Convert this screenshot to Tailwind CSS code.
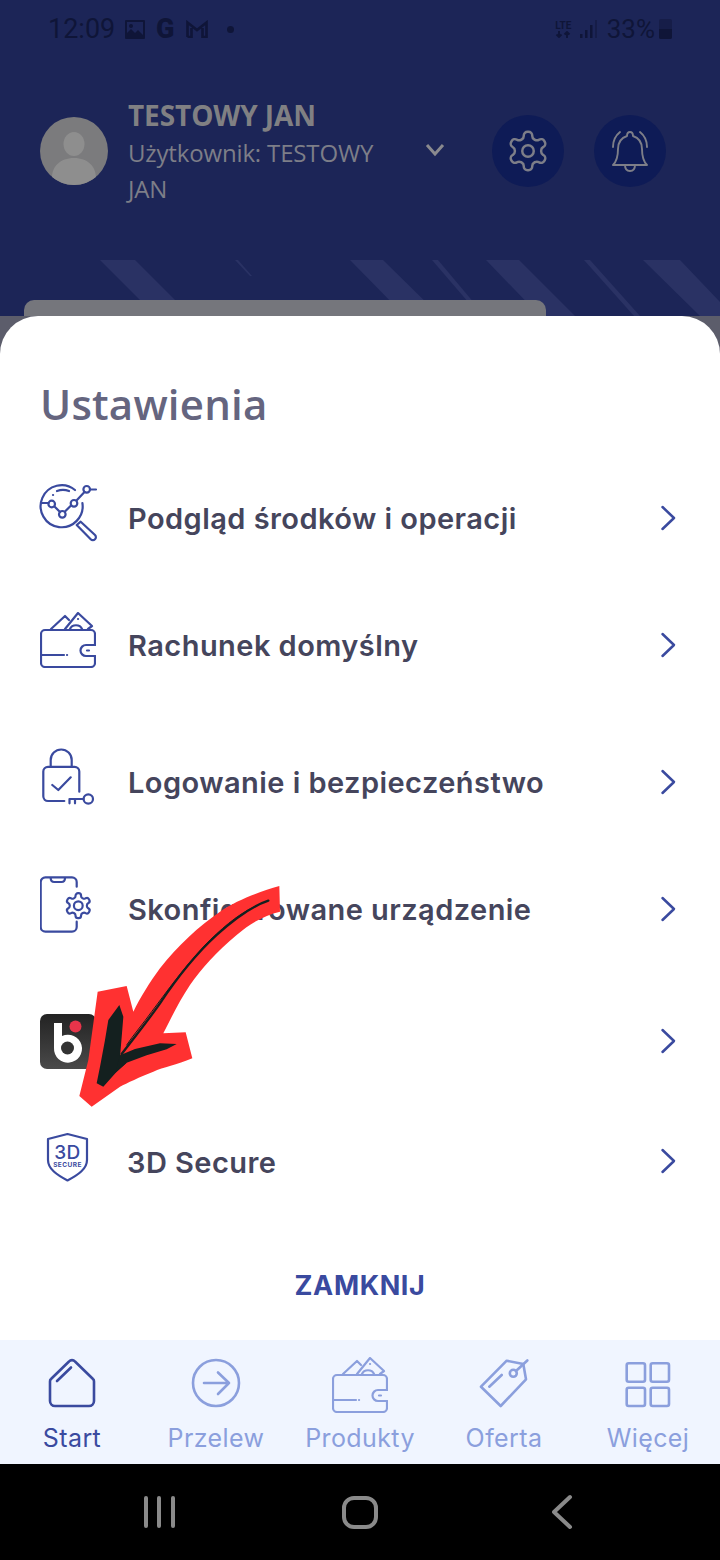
<!DOCTYPE html>
<html lang="pl">
<head>
  <meta charset="UTF-8"/>
  <meta name="viewport" content="width=device-width, initial-scale=1.0"/>
  <title>Ustawienia</title>
  <script src="https://cdn.jsdelivr.net/npm/@tailwindcss/browser@4"></script>
</head>
<body class="bg-black">
<div class="relative w-[720px] h-[1560px] overflow-hidden flex flex-col font-['Inter','Noto_Sans',sans-serif]">

  <!-- Dimmed header -->
  <header class="relative h-[316px] shrink-0 bg-[#1c2557] overflow-hidden">
    <!-- stripes -->
    <svg class="absolute left-0 top-0" width="720" height="316" viewBox="0 0 720 316" fill="#2a3264">
      <polygon points="100,260 135,260 191,316 156,316"/>
      <polygon points="235,260 238,260 252,276 250,276"/>
      <polygon points="350,260 383,260 440,316 405,316"/>
      <polygon points="432,260 438,260 480,310 475,310"/>
      <polygon points="486,260 519,260 575,316 540,316"/>
      <polygon points="584,260 590,260 640,316 634,316"/>
      <polygon points="643,260 680,260 720,302 720,316 700,316"/>
    </svg>
    <div class="absolute left-[24px] top-[300px] w-[522px] h-[30px] rounded-t-[10px] bg-[#75767c]"></div>

    <!-- status bar -->
    <div class="relative h-[58px] flex items-center justify-between pl-[48px] pr-[48px] text-[#0f1538]">
      <div class="flex items-center">
        <span class="text-[27px] font-['Roboto'] font-normal w-[77px]">12:09</span>
        <svg width="20" height="19" viewBox="0 0 20 19" fill="#0f1538"><path d="M1 0h18a1 1 0 0 1 1 1v17a1 1 0 0 1-1 1H1a1 1 0 0 1-1-1V1a1 1 0 0 1 1-1zM2 2v11l4-4 4 4 3-3 5 5V2z" fill-rule="evenodd"/><circle cx="6" cy="6" r="2"/></svg>
        <span class="ml-[11px] w-[29px] text-[27px] leading-none font-['Roboto'] font-black">G</span>
        <svg class="ml-[1px]" width="22" height="18" viewBox="0 0 22 18" fill="none" stroke="#0f1538" stroke-width="2.6"><path d="M1.5 17V2.5L11 10l9.500-7.500V17H16.500V8M1.500 17H5.500V8"/></svg>
        <span class="ml-[19px] w-[7px] h-[7px] rounded-full bg-[#0f1538]"></span>
      </div>
      <div class="flex items-center">
        <div class="w-[21px] flex flex-col items-center leading-none">
          <span class="text-[10px] font-bold font-['Roboto'] leading-[10px]">LTE</span>
          <svg width="16" height="7" viewBox="0 0 16 7" fill="none" stroke="#0f1538" stroke-width="1.800"><path d="M4 0v6M1.500 3.500 4 6l2.500-2.500M12 7V1M9.500 3.500 12 1l2.500 2.500"/></svg>
        </div>
        <svg class="ml-[6px]" width="18" height="20" viewBox="0 0 18 20"><rect x="0" y="15" width="2.500" height="4" fill="#0f1538"/><rect x="5" y="11" width="2.500" height="8" fill="#0f1538"/><rect x="10" y="6" width="2.500" height="13" fill="#0f1538"/><rect x="15" y="1" width="2" height="18" fill="#161d48"/></svg>
        <span class="ml-[9px] text-[26px] font-['Roboto'] font-normal">33%</span>
        <div class="ml-[4px] w-[13px] h-[20px] rounded-[2px] bg-[#161d48] flex flex-col justify-end">
          <div class="h-[10px] bg-[#0f1538] rounded-b-[2px]"></div>
        </div>
      </div>
    </div>

    <!-- user row -->
    <div class="relative flex items-center pl-[40px] pt-[38px]">
      <svg class="shrink-0" width="68" height="68" viewBox="0 0 68 68">
        <circle cx="34" cy="34" r="34" fill="#7b7b7d"/>
        <ellipse cx="34" cy="27" rx="10.500" ry="12" fill="#8e8e8e"/>
        <path d="M12.100 60C12 50 20 41 34 41s22 9 21.900 19a34 34 0 0 1-43.800 0z" fill="#8e8e8e"/>
      </svg>
      <div class="ml-[20px] w-[270px] translate-y-[1px]">
        <p class="mb-[2px] text-[28px] leading-[36px] font-bold text-[#808083] font-['Open_Sans'] tracking-[-0.1px]">TESTOWY JAN</p>
        <p class="w-[260px] text-[24px] leading-[36px] text-[#7d7e88] font-['Open_Sans'] tracking-[-0.15px]">Użytkownik: TESTOWY JAN</p>
      </div>
      <svg class="shrink-0 ml-[27px] -mt-[2px]" width="20" height="14" viewBox="0 0 20 14" fill="none" stroke="#8a8a8e" stroke-width="3"><path d="M2 2l8 9 8-9"/></svg>
      <div class="ml-[47px] w-[72px] h-[72px] rounded-full bg-[#0e1b56] flex items-center justify-center">
        <svg width="46" height="46" viewBox="0 0 24 24" fill="none" stroke="#7d7e88" stroke-width="1.300"><path d="M12.220 2h-.44a2 2 0 0 0-2 2v.18a2 2 0 0 1-1 1.730l-.43.25a2 2 0 0 1-2 0l-.15-.08a2 2 0 0 0-2.730.73l-.22.38a2 2 0 0 0 .73 2.730l.15.1a2 2 0 0 1 1 1.720v.51a2 2 0 0 1-1 1.740l-.15.09a2 2 0 0 0-.73 2.730l.22.38a2 2 0 0 0 2.730.73l.15-.08a2 2 0 0 1 2 0l.43.25a2 2 0 0 1 1 1.730V20a2 2 0 0 0 2 2h.44a2 2 0 0 0 2-2v-.18a2 2 0 0 1 1-1.730l.43-.25a2 2 0 0 1 2 0l.15.08a2 2 0 0 0 2.730-.73l.22-.39a2 2 0 0 0-.73-2.730l-.15-.08a2 2 0 0 1-1-1.740v-.5a2 2 0 0 1 1-1.740l.15-.09a2 2 0 0 0 .73-2.730l-.22-.38a2 2 0 0 0-2.730-.73l-.15.08a2 2 0 0 1-2 0l-.43-.25a2 2 0 0 1-1-1.730V4a2 2 0 0 0-2-2z"/><circle cx="12" cy="12" r="3"/></svg>
      </div>
      <div class="ml-[30px] w-[72px] h-[72px] rounded-full bg-[#0e1b56] flex items-center justify-center">
        <svg width="40" height="44" viewBox="610 130 40 44" fill="none" stroke="#7d7e88" stroke-width="1.900" stroke-linejoin="round" stroke-linecap="round">
          <path d="M630 133c-2 0-3 2-3 4-6 2-9 7-9 13 0 7-1 12-5 16h34c-4-4-5-9-5-16 0-6-3-11-9-13 0-2-1-4-3-4z"/>
          <path d="M625 166c0 4 2 6 5 6s5-2 5-6"/>
          <path d="M613 148c0-6 2-11 7-15M647 148c0-6-2-11-7-15"/>
        </svg>
      </div>
    </div>
  </header>

  <!-- Settings sheet -->
  <main class="relative flex-1 bg-[#5c5d6b]">
    <div class="h-full bg-white rounded-t-[38px] pl-[40px] pr-[43px]">
      <h1 class="pt-[60px] text-[42px] leading-[56px] font-semibold text-[#65657f] font-['Open_Sans'] tracking-[0.2px]">Ustawienia</h1>

      <ul class="text-[#45455c] text-[29px] font-semibold tracking-[0.45px]">
        <li class="flex items-center h-[64px] mt-[55px]">
          <svg class="w-[60px] h-[60px] shrink-0 -ml-[2px] mr-[30px] -mt-[10px]" viewBox="38 484 60 60" fill="none" stroke="#3a4a9f" stroke-width="2.200" stroke-linecap="round" stroke-linejoin="round">
            <path d="M82.400 503a21 21 0 1 1-7.400-13M41 503h7.500M55 507l5 5M65 511.500l6-6M76.500 500.500l8-8.500M90 489.500h6"/>
            <path d="M76.700 525l4-3.300L95 535a2.800 2.800 0 0 1-4.300 4.300z"/>
            <path d="M57 491c4-1.500 8-1.500 12 0M53 495h.1"/>
            <circle cx="51.700" cy="504" r="3.300"/><circle cx="62.300" cy="514.300" r="3.300"/><circle cx="74" cy="503.300" r="3.300"/><circle cx="86.700" cy="489.300" r="3.300"/>
          </svg>
          <span class="flex-1">Podgląd środków i operacji</span>
          <svg class="-mt-[2px]" width="17" height="26" viewBox="0 0 17 26" fill="none" stroke="#3a4a9f" stroke-width="2.500" stroke-linecap="round" stroke-linejoin="round"><path d="M2.500 2 14 13 2.500 24"/></svg>
        </li>
        <li class="flex items-center h-[64px] mt-[63px]">
          <svg class="w-[56px] h-[56px] shrink-0 mr-[32px] -mt-[12px] text-[#3a4a9f]" viewBox="0 0 56 56" fill="none" stroke="currentColor" stroke-width="2.200" stroke-linecap="round" stroke-linejoin="round">
            <path d="M24 43H1.200M27 43h.1M55 33V22a4 4 0 0 0-4-4H5a4 4 0 0 0-4 4v29a4 4 0 0 0 4 4h46a4 4 0 0 0 4-4V44"/>
            <path d="M55 33H46a5.500 5.500 0 0 0 0 11h9M47 38.500h2"/>
            <path d="M11 17 25 4l4 4M25 17 38 1l14 13-4 3M30 17c2-5 10-5 12 0M38 7h.1"/>
          </svg>
          <span class="flex-1">Rachunek domyślny</span>
          <svg class="-mt-[2px]" width="17" height="26" viewBox="0 0 17 26" fill="none" stroke="#3a4a9f" stroke-width="2.500" stroke-linecap="round" stroke-linejoin="round"><path d="M2.500 2 14 13 2.500 24"/></svg>
        </li>
        <li class="flex items-center h-[64px] mt-[73px]">
          <svg class="w-[56px] h-[60px] shrink-0 mr-[32px] -mt-[12px]" viewBox="40 747 56 60" fill="none" stroke="#3a4a9f" stroke-width="2.200" stroke-linecap="round" stroke-linejoin="round">
            <path d="M64.300 801H48a4.700 4.700 0 0 1-4.700-4.700V771.500a4.700 4.700 0 0 1 4.700-4.700h26.600a4.700 4.700 0 0 1 4.700 4.700v20.200"/>
            <path d="M50.700 766.700V760a10.500 10.500 0 0 1 21 0v6.700M52.300 785l6 5 12.400-12.700"/>
            <circle cx="88.300" cy="799" r="4.700"/><path d="M83.500 799H69.500v4.300M75 799v4.300"/>
          </svg>
          <span class="flex-1">Logowanie i bezpieczeństwo</span>
          <svg class="-mt-[2px]" width="17" height="26" viewBox="0 0 17 26" fill="none" stroke="#3a4a9f" stroke-width="2.500" stroke-linecap="round" stroke-linejoin="round"><path d="M2.500 2 14 13 2.500 24"/></svg>
        </li>
        <li class="flex items-center h-[64px] mt-[63px]">
          <svg class="w-[56px] h-[58px] shrink-0 mr-[32px] -mt-[10px]" viewBox="40 876 56 58" fill="none" stroke="#3a4a9f" stroke-width="2.200" stroke-linecap="round" stroke-linejoin="round">
            <path d="M76.700 886.700V882a4.700 4.700 0 0 0-4.700-4.700H45.400a4.700 4.700 0 0 0-4.700 4.700v45a4.700 4.700 0 0 0 4.700 4.700H72a4.700 4.700 0 0 0 4.700-4.700v-5.300"/>
            <path d="M50.700 878c0 2.500 1.500 4 3.500 4h7.300c2 0 3.500-1.500 3.500-4"/>
            <g transform="translate(63.300 890.700) scale(1.250)" stroke-width="1.750"><path d="M12.220 2h-.44a2 2 0 0 0-2 2v.18a2 2 0 0 1-1 1.730l-.43.25a2 2 0 0 1-2 0l-.15-.08a2 2 0 0 0-2.730.73l-.22.38a2 2 0 0 0 .73 2.730l.15.1a2 2 0 0 1 1 1.720v.51a2 2 0 0 1-1 1.740l-.15.09a2 2 0 0 0-.73 2.730l.22.38a2 2 0 0 0 2.730.73l.15-.08a2 2 0 0 1 2 0l.43.25a2 2 0 0 1 1 1.730V20a2 2 0 0 0 2 2h.44a2 2 0 0 0 2-2v-.18a2 2 0 0 1 1-1.730l.43-.25a2 2 0 0 1 2 0l.15.08a2 2 0 0 0 2.730-.73l.22-.39a2 2 0 0 0-.73-2.730l-.15-.08a2 2 0 0 1-1-1.740v-.5a2 2 0 0 1 1-1.740l.15-.09a2 2 0 0 0 .73-2.730l-.22-.38a2 2 0 0 0-2.730-.73l-.15.08a2 2 0 0 1-2 0l-.43-.25a2 2 0 0 1-1-1.730V4a2 2 0 0 0-2-2z"/><circle cx="12" cy="12" r="3.500"/></g>
          </svg>
          <span class="flex-1">Skonfigurowane urządzenie</span>
          <svg class="-mt-[2px]" width="17" height="26" viewBox="0 0 17 26" fill="none" stroke="#3a4a9f" stroke-width="2.500" stroke-linecap="round" stroke-linejoin="round"><path d="M2.500 2 14 13 2.500 24"/></svg>
        </li>
        <li class="flex items-center h-[64px] mt-[67px]">
          <div class="w-[56px] h-[55px] rounded-[7px] bg-gradient-to-b from-[#232323] to-[#4a4a4a] flex-none">
            <svg width="56" height="55" viewBox="0 0 56 55"><path d="M14 9h8v13a14 14 0 1 1-8 12z" fill="#fff"/><circle cx="27.500" cy="34" r="6.500" fill="#333"/><circle cx="35.500" cy="12.500" r="6" fill="#e8344a"/></svg>
          </div>
          <span class="flex-1"></span>
          <svg width="17" height="26" viewBox="0 0 17 26" fill="none" stroke="#3a4a9f" stroke-width="2.500" stroke-linecap="round" stroke-linejoin="round"><path d="M2.500 2 14 13 2.500 24"/></svg>
        </li>
        <li class="flex items-center h-[64px] mt-[58px]">
          <svg class="w-[56px] h-[52px] shrink-0 mr-[31px] -mt-[12px]" viewBox="40 1131 56 52" fill="none" stroke="#3a4a9f" stroke-width="2.200" stroke-linejoin="round">
            <path d="M67.500 1134 87 1139v21c0 9-9 15-19.500 20.500C57 1175 48 1169 48 1160v-21z"/>
            <text x="67.500" y="1159" text-anchor="middle" font-family="Inter" font-size="19" font-weight="500" fill="#3a4a9f" stroke="none">3D</text>
            <text x="67.500" y="1167" text-anchor="middle" font-family="Inter" font-size="6.500" font-weight="700" fill="#3a4a9f" stroke="none">SECURE</text>
          </svg>
          <span class="flex-1">3D Secure</span>
          <svg class="-mt-[4px]" width="17" height="26" viewBox="0 0 17 26" fill="none" stroke="#3a4a9f" stroke-width="2.500" stroke-linecap="round" stroke-linejoin="round"><path d="M2.500 2 14 13 2.500 24"/></svg>
        </li>
      </ul>

      <p class="mt-[73px] -mr-[3px] text-center text-[27px] leading-[36px] font-bold text-[#3a4a9f] tracking-[0.6px]">ZAMKNIJ</p>
    </div>
  </main>

  <!-- Bottom navigation -->
  <nav class="h-[124px] shrink-0 bg-[#f0f5ff] grid grid-cols-5 text-[#8b9fdd] text-[25px] tracking-[0.4px] text-center">
    <a href="#" class="flex flex-col items-center text-[#3a4a9f]">
      <svg class="mt-[18px]" width="48" height="50" viewBox="48 1358 48 50" fill="none" stroke="currentColor" stroke-width="2.600" stroke-linecap="round" stroke-linejoin="round"><path d="M50 1381.500a3 3 0 0 1 1-2.500l18-17.500a4 4 0 0 1 6 0l18 17.500a3 3 0 0 1 1 2.500V1401a5 5 0 0 1-5 5H55a5 5 0 0 1-5-5z"/><path d="M57 1381l14-13.500"/></svg>
      <span class="mt-[14px] leading-[32px]">Start</span>
    </a>
    <a href="#" class="flex flex-col items-center">
      <svg class="mt-[18px]" width="50" height="50" viewBox="191 1358 50 50" fill="none" stroke="currentColor" stroke-width="2.600" stroke-linecap="round" stroke-linejoin="round"><circle cx="216" cy="1383" r="23"/><path d="M204 1383h25M218 1372.500 229 1383l-11 11"/></svg>
      <span class="mt-[14px] leading-[32px]">Przelew</span>
    </a>
    <a href="#" class="flex flex-col items-center">
      <svg class="mt-[17px]" width="56" height="56" viewBox="0 0 56 56" fill="none" stroke="currentColor" stroke-width="2.200" stroke-linecap="round" stroke-linejoin="round">
        <path d="M24 43H1.200M27 43h.1M55 33V22a4 4 0 0 0-4-4H5a4 4 0 0 0-4 4v29a4 4 0 0 0 4 4h46a4 4 0 0 0 4-4V44"/>
        <path d="M55 33H46a5.500 5.500 0 0 0 0 11h9M47 38.500h2"/>
        <path d="M11 17 25 4l4 4M25 17 38 1l14 13-4 3M30 17c2-5 10-5 12 0M38 7h.1"/>
      </svg>
      <span class="mt-[9px] leading-[32px]">Produkty</span>
    </a>
    <a href="#" class="flex flex-col items-center">
      <svg class="mt-[18px]" width="50" height="50" viewBox="479 1358 50 50" fill="none" stroke="currentColor" stroke-width="2.600" stroke-linecap="round" stroke-linejoin="round"><path d="M481 1386.700 506.700 1360.700 523.300 1364 526 1379.300 500.700 1406z"/><circle cx="513.300" cy="1373.300" r="3.500"/><path d="M516 1371l11.300-10.500M489.300 1386.700 501.700 1375"/></svg>
      <span class="mt-[14px] leading-[32px]">Oferta</span>
    </a>
    <a href="#" class="flex flex-col items-center">
      <svg class="mt-[18px]" width="50" height="50" viewBox="623 1358 50 50" fill="none" stroke="currentColor" stroke-width="2.600" stroke-linejoin="round"><rect x="626.700" y="1363.300" width="18.300" height="18.400" rx="2"/><rect x="650.700" y="1363.300" width="18.300" height="18.400" rx="2"/><rect x="626.700" y="1387.700" width="18.300" height="18.300" rx="2"/><rect x="650.700" y="1387.700" width="18.300" height="18.300" rx="2"/></svg>
      <span class="mt-[14px] leading-[32px]">Więcej</span>
    </a>
  </nav>

  <!-- Android buttons -->
  <div class="h-[96px] shrink-0 bg-black grid grid-cols-3 items-center">
    <div class="flex justify-center gap-[9.500px] pl-[78px]">
      <span class="w-[4px] h-[32px] rounded-full bg-[#8a8a8a]"></span>
      <span class="w-[4px] h-[32px] rounded-full bg-[#8a8a8a]"></span>
      <span class="w-[4px] h-[32px] rounded-full bg-[#8a8a8a]"></span>
    </div>
    <div class="flex justify-center">
      <span class="w-[36px] h-[33px] rounded-[12px] border-[4px] border-[#8a8a8a]"></span>
    </div>
    <div class="flex pl-[72px]">
      <svg width="22" height="36" viewBox="0 0 22 36" fill="none" stroke="#8a8a8a" stroke-width="4" stroke-linecap="round" stroke-linejoin="round"><path d="M18 3 2 18l16 15"/></svg>
    </div>
  </div>

  <!-- Red arrow drawn on the screenshot -->
  <svg class="absolute left-[20px] top-[870px]" width="300" height="330" viewBox="0 0 900 990">
    <path fill="#ff3131" d="M778 48 780 125C735 135 690 160 650 195 590 245 545 295 510 345 480 390 455 440 430 490L497 487 517 565C470 585 430 592 400 605 360 620 320 640 300 650L215 710 178 678 205 570 233 365 320 348 340 425C360 385 390 335 420 295 470 230 540 165 600 125 650 90 720 65 778 48z"/>
    <path fill="#14201f" d="M298 405 310 440 306 490 300 560 320 578 290 605 250 650 230 640 240 590 255 510 265 450z"/>
    <path fill="none" stroke="#14201f" stroke-width="7" stroke-linecap="round" d="M745 92C690 110 640 150 590 195 530 250 470 325 420 400 385 450 345 500 305 552"/>
    <path fill="none" stroke="#14201f" stroke-width="3" stroke-linecap="round" d="M700 112C650 135 600 180 555 225 490 295 440 365 395 425 370 460 340 495 320 525"/>
    <path fill="#14201f" d="M300 556 345 537 420 520 470 522 440 538 380 556 320 578 285 610z"/>
  </svg>
</div>
</body>
</html>
